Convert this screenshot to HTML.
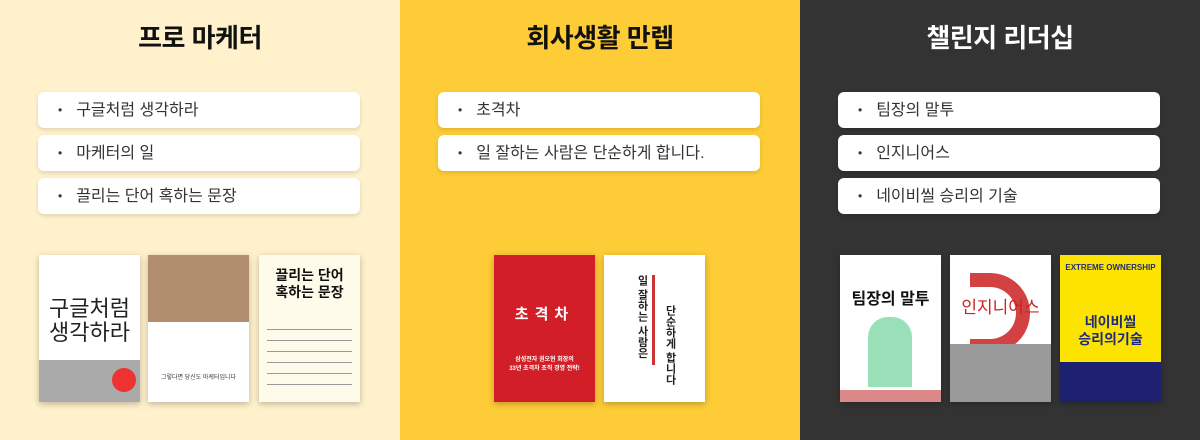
<!DOCTYPE html>
<html><head><meta charset="utf-8"><style>
*{margin:0;padding:0;box-sizing:border-box}
body{width:1200px;height:440px;overflow:hidden;display:flex;font-family:"Liberation Sans","Noto Sans CJK KR",sans-serif}
.col{width:400px;height:440px;position:relative}
.c1{background:#fef1cb}.c2{background:#fdcc36}.c3{background:#333}
h2{position:absolute;top:18px;width:100%;text-align:center;font-size:26px;font-weight:700;color:#111;letter-spacing:-0.5px}
.c3 h2{color:#fff}
.it{position:absolute;left:38px;width:322px;height:36px;background:#fff;border-radius:6px;box-shadow:0 2px 4px rgba(0,0,0,.12);font-size:16px;color:#333;line-height:36px;padding-left:20px}
.it:before{content:"•";font-size:12px;margin-right:14px;vertical-align:1px}
.b{position:absolute;top:255px;width:101px;height:147px;box-shadow:0 2px 6px rgba(0,0,0,.25);overflow:hidden;font-weight:700;text-align:center}
</style></head><body>
<div class="col c1"><h2>프로 마케터</h2>
<div class="it" style="top:92px">구글처럼 생각하라</div>
<div class="it" style="top:135px">마케터의 일</div>
<div class="it" style="top:178px">끌리는 단어 혹하는 문장</div>
<div class="b" style="left:39px;background:#fff">
<div style="margin-top:42px;font-size:22px;font-weight:400;color:#222;line-height:24px">구글처럼<br>생각하라</div>
<div style="position:absolute;bottom:0;left:0;right:0;height:42px;background:#aaa"></div>
<div style="position:absolute;right:4px;bottom:10px;width:24px;height:24px;border-radius:50%;background:#e33"></div></div>
<div class="b" style="left:148px;background:#fff"><div style="height:67px;background:#b08e6e"></div>
<div style="font-size:6px;color:#333;margin-top:50px;font-weight:400">그렇다면 당신도 마케터입니다</div></div>
<div class="b" style="left:259px;background:#fffbea"><div style="margin-top:12px;font-size:14px;line-height:17px;color:#111">끌리는 단어<br>혹하는 문장</div>
<div style="margin:18px 8px 0;height:70px;background:repeating-linear-gradient(#fffbea 0 10px,#999 10px 11px)"></div></div>
</div>
<div class="col c2"><h2>회사생활 만렙</h2>
<div class="it" style="top:92px">초격차</div>
<div class="it" style="top:135px">일 잘하는 사람은 단순하게 합니다.</div>
<div class="b" style="left:94px;background:#d21e26;color:#fff"><div style="margin-top:48px;font-size:15px;letter-spacing:6px">초격차</div>
<div style="margin-top:30px;font-size:6px">삼성전자 권오현 회장의<br>33년 초격차 조직 경영 전략!</div></div>
<div class="b" style="left:204px;background:#fff"><div style="position:absolute;left:48px;top:20px;width:3px;height:90px;background:#c33"></div>
<div style="position:absolute;left:30px;top:20px;writing-mode:vertical-rl;font-size:11px;color:#222">일 잘하는 사람은</div>
<div style="position:absolute;left:58px;top:50px;writing-mode:vertical-rl;font-size:11px;color:#222">단순하게 합니다</div></div>
</div>
<div class="col c3"><h2>챌린지 리더십</h2>
<div class="it" style="top:92px">팀장의 말투</div>
<div class="it" style="top:135px">인지니어스</div>
<div class="it" style="top:178px">네이비씰 승리의 기술</div>
<div class="b" style="left:40px;background:#fff"><div style="margin-top:30px;font-size:16px;color:#111">팀장의 말투</div>
<div style="position:absolute;left:28px;top:62px;width:44px;height:70px;background:#5c8;border-radius:20px 20px 0 0;opacity:.6"></div>
<div style="position:absolute;bottom:0;left:0;right:0;height:12px;background:#d88"></div></div>
<div class="b" style="left:150px;background:#fff"><div style="position:absolute;left:20px;top:18px;width:60px;height:80px;border:14px solid #c22;border-left:none;border-radius:0 40px 40px 0;opacity:.85"></div>
<div style="position:relative;margin-top:38px;font-size:17px;color:#c22;font-weight:400">인지니어스</div>
<div style="position:absolute;bottom:0;left:0;right:0;height:58px;background:#999"></div></div>
<div class="b" style="left:260px;background:#fde400"><div style="margin-top:8px;font-size:8px;color:#1e2a7a">EXTREME OWNERSHIP</div>
<div style="margin-top:42px;font-size:14px;line-height:17px;color:#1e2a7a">네이비씰<br>승리의기술</div>
<div style="position:absolute;bottom:0;left:0;right:0;height:40px;background:#1e2170"></div></div>
</div>
</body></html>
